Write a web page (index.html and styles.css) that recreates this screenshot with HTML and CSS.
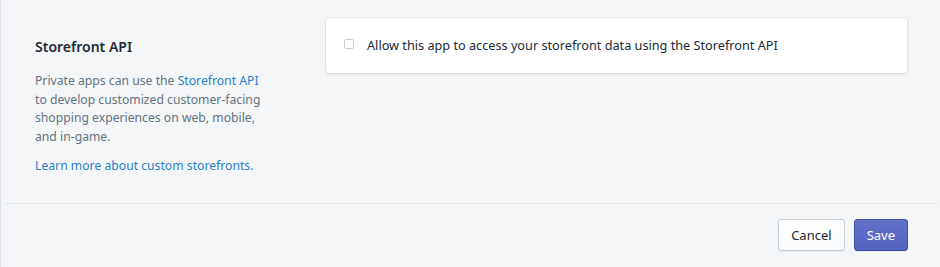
FILE: index.html
```html
<!DOCTYPE html>
<html>
<head>
<meta charset="utf-8">
<link rel="stylesheet" href="styles.css">
</head>
<body>
<div class="page">
  <section class="layout">
    <div class="annotation">
      <h2 class="title">Storefront API</h2>
      <p class="desc">Private apps can use the <a href="#" class="link">Storefront API</a> to develop customized customer-facing shopping experiences on web, mobile, and in-game.</p>
      <p class="desc"><a href="#" class="link">Learn more about custom storefronts.</a></p>
    </div>
    <div class="card">
      <label class="check">
        <span class="box"></span>
        <span class="check-label">Allow this app to access your storefront data using the Storefront API</span>
      </label>
    </div>
  </section>
  <footer class="actions">
    <button class="btn">Cancel</button>
    <button class="btn primary">Save</button>
  </footer>
</div>
</body>
</html>
```
FILE: styles.css
```css
html, body {
  margin: 0;
  padding: 0;
  background: #f4f6f8;
}
body {
  font-family: "Noto Sans", "Open Sans", sans-serif;
  color: #212b36;
  width: 940px;
  height: 267px;
  overflow: hidden;
}
.page {
  border-left: 1px solid #dfe3e8;
  height: 267px;
  box-sizing: border-box;
}
.layout {
  display: flex;
  gap: 57px;
  padding: 18px 33px 0 34px;
  height: 203px;
  box-sizing: border-box;
}
.annotation {
  width: 234px;
  flex: none;
  padding-top: 19px;
}
.title {
  margin: 0 0 15px;
  font-size: 14px;
  font-weight: 600;
  line-height: 20px;
  color: #212b36;
}
.desc {
  margin: 0 0 10px;
  font-size: 12.2px;
  line-height: 18.7px;
  color: #637381;
}
.link {
  color: #2a7fc8;
  text-decoration: none;
}
.card {
  flex: 1;
  height: 55px;
  background: #fff;
  border-radius: 3px;
  box-shadow: 0 0 0 1px rgba(63,63,68,0.05), 0 1px 3px 0 rgba(63,63,68,0.15);
  box-sizing: border-box;
  padding: 19px 18px;
}
.check {
  display: flex;
  align-items: flex-start;
}
.box {
  width: 8px;
  height: 8px;
  border: 1px solid #c4cdd5;
  border-radius: 2px;
  background: #fff;
  margin: 2px 13px 0 0;
  flex: none;
}
.check-label {
  font-size: 12.7px;
  line-height: 16px;
  color: #212b36;
}
.actions {
  margin-left: 4px;
  margin-right: 3px;
  border-top: 1px solid #e3e6e9;
  display: flex;
  justify-content: flex-end;
  gap: 9px;
  padding: 15px 29px 0 0;
}
.btn {
  font-family: inherit;
  font-size: 13px;
  height: 32px;
  padding: 0 12px;
  border-radius: 3px;
  border: 1px solid #c4cdd5;
  background: linear-gradient(#fff, #f9fafb);
  color: #212b36;
  box-shadow: 0 1px 0 rgba(22,29,37,0.05);
}
.btn.primary {
  background: linear-gradient(#6371c7, #5563c1);
  border-color: #3f4eae;
  color: #fff;
}
```
